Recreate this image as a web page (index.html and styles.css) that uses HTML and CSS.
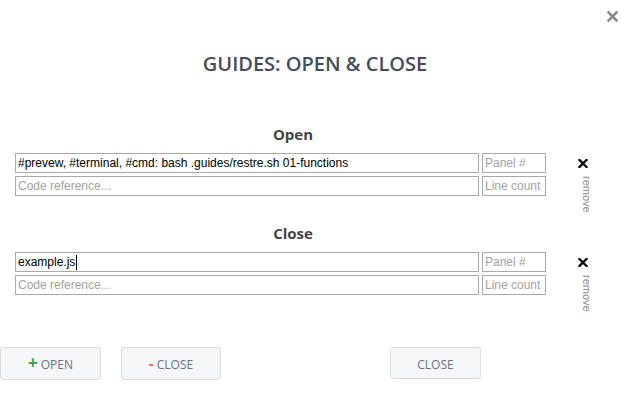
FILE: index.html
```html
<!DOCTYPE html>
<html>
<head>
<meta charset="utf-8">
<link rel="stylesheet" href="styles.css">
</head>
<body>
<div class="modal">
  <span class="dismiss">
    <svg width="11" height="11" viewBox="0 0 11 11"><path d="M1.5 1.5 L9.5 9.5 M9.5 1.5 L1.5 9.5" stroke="#8a8a8e" stroke-width="2.6" stroke-linecap="square"/></svg>
  </span>
  <h2 class="title">GUIDES: OPEN &amp; CLOSE</h2>

  <section class="section first">
    <h3 class="heading">Open</h3>
    <div class="group">
      <div class="fields">
        <div class="row">
          <input class="main" type="text" value="#prevew, #terminal, #cmd: bash .guides/restre.sh 01-functions">
          <input class="side" type="text" placeholder="Panel #">
        </div>
        <div class="row">
          <input class="main" type="text" placeholder="Code reference...">
          <input class="side" type="text" placeholder="Line count">
        </div>
      </div>
      <div class="remove">
        <svg width="10" height="9" viewBox="0 0 10 9"><path d="M1.5 1 L8.5 8 M8.5 1 L1.5 8" stroke="#111" stroke-width="2.4" stroke-linecap="square"/></svg>
        <span class="remove-label">remove</span>
      </div>
    </div>
  </section>

  <section class="section second">
    <h3 class="heading">Close</h3>
    <div class="group">
      <div class="fields">
        <div class="row">
          <div class="main fake">example.js<span class="caret"></span></div>
          <input class="side" type="text" placeholder="Panel #">
        </div>
        <div class="row">
          <input class="main" type="text" placeholder="Code reference...">
          <input class="side" type="text" placeholder="Line count">
        </div>
      </div>
      <div class="remove">
        <svg width="10" height="9" viewBox="0 0 10 9"><path d="M1.5 1 L8.5 8 M8.5 1 L1.5 8" stroke="#111" stroke-width="2.4" stroke-linecap="square"/></svg>
        <span class="remove-label">remove</span>
      </div>
    </div>
  </section>

  <div class="actions">
    <button class="btn btn-open"><span class="plus">+</span> OPEN</button>
    <button class="btn btn-close"><span class="minus">-</span> CLOSE</button>
    <button class="btn btn-done">CLOSE</button>
  </div>
</div>
</body>
</html>
```

FILE: styles.css
```css
html, body {
  margin: 0;
  padding: 0;
  background: #fff;
}
body {
  font-family: "Open Sans", sans-serif;
}
.modal {
  position: relative;
  width: 630px;
  height: 401px;
  overflow: hidden;
}
.dismiss {
  position: absolute;
  top: 11px;
  right: 12px;
  line-height: 0;
}
.title {
  margin: 0;
  padding-top: 50px;
  text-align: center;
  font-size: 20px;
  line-height: 28px;
  font-weight: 600;
  color: #474d5a;
}
.section {
  margin-left: 15px;
  width: 556px;
}
.first {
  margin-top: 46px;
}
.second {
  margin-top: 27px;
}
.heading {
  margin: 0 0 9px 0;
  text-align: center;
  font-size: 15px;
  line-height: 20px;
  font-weight: 700;
  color: #444;
}
.group {
  display: flex;
  align-items: flex-start;
  height: 43px;
}
.fields {
  width: 531px;
  display: flex;
  flex-direction: column;
  gap: 3px;
}
.row {
  display: flex;
  gap: 3px;
}
input, .fake {
  box-sizing: border-box;
  height: 20px;
  border: 1px solid #a9a9a9;
  border-radius: 0;
  padding: 0 2px;
  margin: 0;
  font-family: "Liberation Sans", Arial, sans-serif;
  font-size: 12px;
  color: #000;
  background: #fff;
  outline: none;
}
.fake {
  display: flex;
  align-items: center;
  line-height: 18px;
}
.caret {
  display: inline-block;
  width: 1px;
  height: 15px;
  background: #000;
  margin-left: 1px;
}
input::placeholder {
  color: #a3a3a3;
}
.main {
  width: 464px;
}
.side {
  width: 64px;
}
.remove {
  margin-left: 32px;
  padding-top: 6px;
  display: flex;
  flex-direction: column;
  align-items: flex-start;
}
.remove svg {
  display: block;
}
.remove-label {
  writing-mode: vertical-rl;
  font-family: "Liberation Sans", Arial, sans-serif;
  font-size: 11px;
  line-height: 9px;
  color: #8a8a8a;
  margin-top: 8px;
  margin-left: 4px;
}
.actions {
  display: flex;
  align-items: flex-start;
  margin-top: 52px;
}
.btn {
  box-sizing: border-box;
  height: 33px;
  border: 1px solid #dcdcdf;
  border-radius: 3px;
  background: #f5f6f8;
  font-family: "Open Sans", sans-serif;
  font-size: 12px;
  color: #6c7386;
  padding: 2px 0 0 0;
  margin: 0;
}
.btn-open {
  width: 101px;
}
.btn-close {
  width: 100px;
  margin-left: 20px;
}
.btn-done {
  width: 91px;
  margin-left: 169px;
  height: 32px;
}
.plus {
  color: #43a047;
  font-weight: 700;
  font-size: 17px;
  line-height: 12px;
}
.minus {
  color: #e8604c;
  font-weight: 700;
  font-size: 15px;
  line-height: 12px;
}
```
